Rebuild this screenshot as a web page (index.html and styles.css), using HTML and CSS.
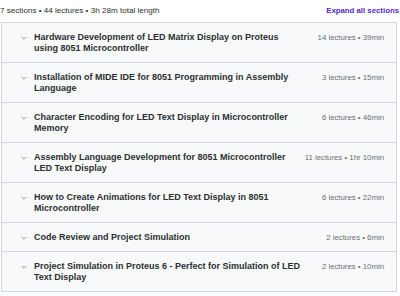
FILE: index.html
```html
<!DOCTYPE html>
<html lang="en">
  <head>
    <meta charset="UTF-8" />
    <meta name="viewport" content="width=device-width, initial-scale=1.0" />
    <title>Course content</title>
    <link rel="stylesheet" href="styles.css">
  </head>
  <body>
    <div class="content">
      <div class="summary">
        <span class="totals">7 sections • 44 lectures • 3h 28m total length</span>
        <button class="expand">Expand all sections</button>
      </div>
      <div class="sections">
        <div class="section">
          <span class="chev"><svg viewBox="0 0 10 6" width="6" height="4"><path d="M1 1l4 4 4-4" fill="none" stroke="#6a6f73" stroke-width="1.2"/></svg></span>
          <span class="title">Hardware Development of LED Matrix Display on Proteus using 8051 Microcontroller</span>
          <span class="stats">14 lectures • 39min</span>
        </div>
        <div class="section">
          <span class="chev"><svg viewBox="0 0 10 6" width="6" height="4"><path d="M1 1l4 4 4-4" fill="none" stroke="#6a6f73" stroke-width="1.2"/></svg></span>
          <span class="title">Installation of MIDE IDE for 8051 Programming in Assembly Language</span>
          <span class="stats">3 lectures • 15min</span>
        </div>
        <div class="section">
          <span class="chev"><svg viewBox="0 0 10 6" width="6" height="4"><path d="M1 1l4 4 4-4" fill="none" stroke="#6a6f73" stroke-width="1.2"/></svg></span>
          <span class="title">Character Encoding for LED Text Display in Microcontroller Memory</span>
          <span class="stats">6 lectures • 46min</span>
        </div>
        <div class="section">
          <span class="chev"><svg viewBox="0 0 10 6" width="6" height="4"><path d="M1 1l4 4 4-4" fill="none" stroke="#6a6f73" stroke-width="1.2"/></svg></span>
          <span class="title">Assembly Language Development for 8051 Microcontroller LED Text Display</span>
          <span class="stats">11 lectures • 1hr 10min</span>
        </div>
        <div class="section">
          <span class="chev"><svg viewBox="0 0 10 6" width="6" height="4"><path d="M1 1l4 4 4-4" fill="none" stroke="#6a6f73" stroke-width="1.2"/></svg></span>
          <span class="title">How to Create Animations for LED Text Display in 8051 Microcontroller</span>
          <span class="stats">6 lectures • 22min</span>
        </div>
        <div class="section">
          <span class="chev"><svg viewBox="0 0 10 6" width="6" height="4"><path d="M1 1l4 4 4-4" fill="none" stroke="#6a6f73" stroke-width="1.2"/></svg></span>
          <span class="title">Code Review and Project Simulation</span>
          <span class="stats">2 lectures • 6min</span>
        </div>
        <div class="section">
          <span class="chev"><svg viewBox="0 0 10 6" width="6" height="4"><path d="M1 1l4 4 4-4" fill="none" stroke="#6a6f73" stroke-width="1.2"/></svg></span>
          <span class="title">Project Simulation in Proteus 6 - Perfect for Simulation of LED Text Display</span>
          <span class="stats">2 lectures • 10min</span>
        </div>
      </div>
    </div>
  </body>
</html>
```
FILE: styles.css
```css
*{
    padding: 0;
    margin: 0;
    box-sizing: border-box;
}
body{
    background-color: white;
    font-family: "Liberation Sans", Arial, sans-serif;
    color: #2d2f31;
}
.content{
    width: 400px;
    padding-top: 4px;
}
.summary{
    display: flex;
    justify-content: space-between;
    align-items: center;
    height: 13px;
    margin-bottom: 5px;
}
.totals{
    font-size: 8.1px;
    color: #2d2f31;
}
.expand{
    border: none;
    background: none;
    font-family: inherit;
    font-size: 7.8px;
    font-weight: bold;
    color: #5624d0;
    padding-right: 1px;
}
.sections{
    margin: 0 3px 0 1px;
    border: 1px solid #d1d7dc;
}
.section{
    display: flex;
    align-items: flex-start;
    padding: 9px 12px 8px 19px;
    background-color: #f7f9fa;
    border-bottom: 1px solid #d1d7dc;
}
.section:last-child{
    border-bottom: none;
}
.chev{
    width: 13px;
    height: 11px;
    flex-shrink: 0;
    display: flex;
    align-items: center;
}
.title{
    flex: 1;
    font-size: 9px;
    font-weight: bold;
    line-height: 11px;
}
.stats{
    margin-left: 16px;
    font-size: 7.8px;
    line-height: 11px;
    color: #6a6f73;
    white-space: nowrap;
}
```
